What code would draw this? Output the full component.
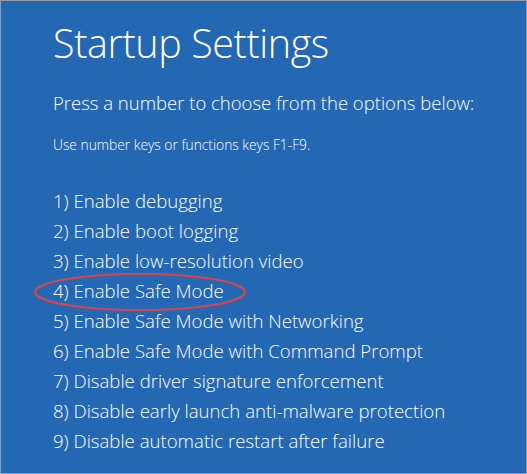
export default function App() {
  const items = [
    "1) Enable debugging",
    "2) Enable boot logging",
    "3) Enable low-resolution video",
    "4) Enable Safe Mode",
    "5) Enable Safe Mode with Networking",
    "6) Enable Safe Mode with Command Prompt",
    "7) Disable driver signature enforcement",
    "8) Disable early launch anti-malware protection",
    "9) Disable automatic restart after failure",
  ];
  return (
    <div className="w-[527px] h-[474px] bg-[#2468b4] border border-[#8a9bb0] text-white font-['Open_Sans',sans-serif] font-light pl-[52px] pt-[14px] overflow-hidden">
      <div className="text-[39.5px] leading-[56px] tracking-[-0.4px]">Startup Settings</div>
      <div className="mt-[19px] text-[18.5px] leading-[26px]">Press a number to choose from the options below:</div>
      <div className="mt-[20px] text-[13.8px] leading-[18px]">Use number keys or functions keys F1-F9.</div>
      <ul className="mt-[32px] text-[18.6px]">
        {items.map((t, i) => (
          <li key={i} className="leading-[30px] relative">
            {i === 3 && (
              <svg className="absolute left-[-20px] top-[-4px]" width="216" height="40" viewBox="0 0 216 40">
                <ellipse cx="107" cy="20" rx="105" ry="18" fill="none" stroke="#d8434f" strokeWidth="2.2" />
              </svg>
            )}
            <span className="relative">{t}</span>
          </li>
        ))}
      </ul>
    </div>
  );
}
